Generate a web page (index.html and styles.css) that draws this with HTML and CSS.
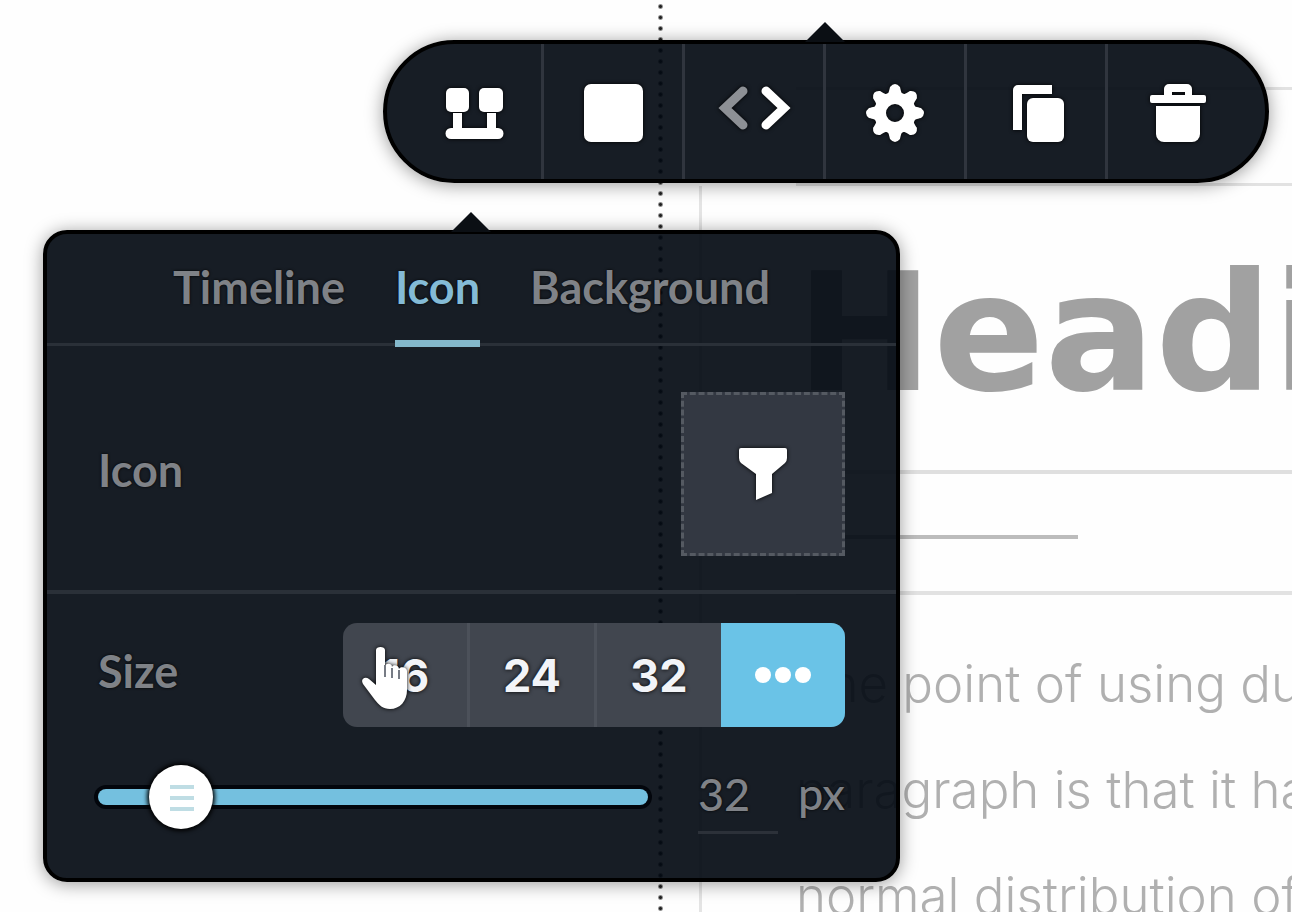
FILE: index.html
```html
<!DOCTYPE html>
<html lang="en">
<head>
  <meta charset="UTF-8" />
  <meta name="viewport" content="width=device-width, initial-scale=1.0">
  <title>Timeline Editor</title>
  <link rel="stylesheet" href="styles.css">
</head>
<body>
  <main class="canvas">
    <div class="block-spacer"></div>
    <div class="block-spacer short"></div>
    <article class="block">
      <h1>Heading</h1>
      <div class="block-divider"><hr></div>
      <p>The point of using dummy<br>paragraph is that it has<br>normal distribution of</p>
    </article>
    <div class="guide"></div>
  </main>

  <div class="toolbar" role="toolbar" aria-label="Element tools">
    <button type="button" aria-label="Timeline">
      <svg width="60" height="60" viewBox="0 0 60 60">
        <rect x="2" y="5" width="23" height="24" rx="5"/>
        <rect x="35" y="5" width="24" height="24" rx="5"/>
        <path d="M9 30h9v15h25V30h9v15h2a5 5 0 0 1 0 11H7a5 5 0 0 1 0-11h2z"/>
      </svg>
    </button>
    <button type="button" aria-label="Background">
      <svg width="60" height="60" viewBox="0 0 60 60"><rect x="1" y="1" width="59" height="58" rx="7"/></svg>
    </button>
    <button type="button" aria-label="Code">
      <svg width="76" height="60" viewBox="0 0 76 60">
        <path class="line dim" d="M27 8 9 25l18 17"/>
        <path class="line" d="m50 8 18 17-18 17"/>
      </svg>
    </button>
    <button type="button" aria-label="Settings">
      <svg width="60" height="60" viewBox="0 0 60 60">
        <g transform="translate(30 30)">
          <circle r="15" class="ring"/>
          <path id="tooth" d="M-10-17C-6-19-6-22-5-26q5-6 10 0C6-22 6-19 10-17z"/>
          <use href="#tooth" transform="rotate(45)"/>
          <use href="#tooth" transform="rotate(90)"/>
          <use href="#tooth" transform="rotate(135)"/>
          <use href="#tooth" transform="rotate(180)"/>
          <use href="#tooth" transform="rotate(225)"/>
          <use href="#tooth" transform="rotate(270)"/>
          <use href="#tooth" transform="rotate(315)"/>
        </g>
      </svg>
    </button>
    <button type="button" aria-label="Duplicate">
      <svg width="60" height="60" viewBox="0 0 60 60">
        <path d="M12 2h34v9H16v36H7V7a5 5 0 0 1 5-5z"/>
        <rect x="21" y="15" width="37" height="44" rx="6"/>
      </svg>
    </button>
    <button type="button" aria-label="Delete">
      <svg width="60" height="60" viewBox="0 0 60 60">
        <path fill-rule="evenodd" d="M21 1h18a5 5 0 0 1 5 5v6h12a2 2 0 0 1 2 2v4a2 2 0 0 1-2 2H4a2 2 0 0 1-2-2v-4a2 2 0 0 1 2-2h12V6a5 5 0 0 1 5-5zm3 8v3h13V9z"/>
        <path d="M8 23h44v28a8 8 0 0 1-8 8H16a8 8 0 0 1-8-8z"/>
      </svg>
    </button>
  </div>

  <section class="panel">
    <nav class="tabs">
      <a href="#timeline">Timeline</a>
      <a href="#icon" class="active">Icon</a>
      <a href="#background">Background</a>
    </nav>
    <div class="row icon-row">
      <label class="label" for="iconPicker">Icon</label>
      <button type="button" class="icon-picker" id="iconPicker">
        <svg width="50" height="54" viewBox="0 0 50 54"><path d="M3 1h44q2 0 2 2v8q0 3-2 5L34 27v19l-16 7V27L3 16q-2-2-2-5V3q0-2 2-2z"/></svg>
      </button>
    </div>
    <div class="row size-row">
      <span class="label" id="sizeLabel">Size</span>
      <div class="segments" role="group" aria-labelledby="sizeLabel">
        <button type="button">16</button>
        <button type="button">24</button>
        <button type="button">32</button>
        <button type="button" class="active" aria-label="Custom size">
          <svg width="60" height="18" viewBox="0 0 60 18"><circle cx="10" cy="9" r="8"/><circle cx="30" cy="9" r="8"/><circle cx="50" cy="9" r="8"/></svg>
        </button>
      </div>
    </div>
    <div class="row slider-row">
      <input type="range" class="slider" min="0" max="304" value="32" aria-labelledby="sizeLabel">
      <input type="text" class="number" id="sizeValue" value="32">
      <label class="label unit" for="sizeValue">px</label>
    </div>
  </section>

  <!-- hand pointer over the 16 button -->
  <svg class="pointer" width="48" height="66" viewBox="0 0 48 66">
    <path d="M15 5c0-4 9-4 9 0v16c1-3 7-3 7 1 1-3 7-2 7 2 1-3 8-2 8 2v19c0 11-7 19-17 19-7 0-11-4-15-9L2 39c-3-5 2-8 6-5l7 6z"/>
    <path class="fingers" d="M24 20v12M31 23v10M38 25v9"/>
  </svg>
</body>
</html>
```
FILE: styles.css
```css
* {
  box-sizing: border-box;
}
body {
  margin: 0;
  height: 100vh;
  overflow: hidden;
  background: #fefefe;
  font-family: 'Lato', sans-serif;
}
button {
  padding: 0;
  border: none;
  background: none;
  cursor: pointer;
}
svg {
  display: block;
  fill: #fff;
}

/* page being edited */
.canvas {
  position: relative;
  height: 100vh;
  overflow: hidden;
}
.guide {
  position: absolute;
  top: 0;
  bottom: 0;
  left: 658px;
  width: 5px;
  background: radial-gradient(circle, #222 1px, transparent 3px) 0 1px / 5px 11px;
}
.block-spacer {
  height: 90px;
  margin-left: 796px;
  border-bottom: 3px solid #e2e2e2;
}
.block-spacer.short {
  height: 96px;
}
.block {
  margin-left: 699px;
  padding-left: 94px;
  border-left: 3px solid #e4e4e4;
  white-space: nowrap;
  font-family: 'Inter', sans-serif;
}
h1 {
  margin: 0;
  height: 288px;
  border-bottom: 4px solid #dfdfdf;
  font-family: 'DejaVu Sans', sans-serif;
  font-size: 164px;
  font-weight: 700;
  line-height: 296px;
  color: #a1a1a1;
}
.block-divider {
  height: 121px;
  padding-top: 61px;
  border-bottom: 4px solid #e2e2e2;
}
hr {
  width: 282px;
  height: 4px;
  margin: 0;
  border: none;
  background: #bcbcbc;
}
p {
  margin: 36px 0 0;
  font-size: 51px;
  font-weight: 300;
  line-height: 106px;
  color: #b0b0b0;
}

/* floating dark surfaces */
.toolbar,
.panel {
  position: absolute;
  border: 4px solid #000;
  background: rgba(3, 10, 18, 0.92);
  box-shadow: 0 2px 18px rgba(0, 0, 0, 0.4);
}
.toolbar::before,
.panel::before {
  content: "";
  position: absolute;
  width: 40px;
  height: 20px;
  background: #0b0f14;
  clip-path: polygon(50% 0, 100% 100%, 0 100%);
}
.toolbar {
  top: 40px;
  left: 383px;
  display: flex;
  height: 143px;
  border-radius: 72px;
}
.toolbar::before {
  top: -22px;
  left: 418px;
}
.toolbar button {
  display: flex;
  align-items: center;
  justify-content: center;
  width: 141px;
  padding-top: 2px;
  border-right: 3px solid #30353e;
}
.toolbar button:first-child {
  width: 157px;
  padding-left: 20px;
}
.toolbar button:last-child {
  width: 157px;
  padding-right: 17px;
  border-right: none;
}
.toolbar svg,
.icon-picker svg {
  filter: drop-shadow(0 0 2px #000);
}
.line {
  fill: none;
  stroke: #fff;
  stroke-width: 9;
  stroke-linecap: round;
}
.line.dim {
  stroke: #8d9095;
}
.ring {
  fill: none;
  stroke: #fff;
  stroke-width: 12;
}

.panel {
  top: 230px;
  left: 43px;
  width: 857px;
  height: 652px;
  border-radius: 24px;
  font-size: 45px;
  font-weight: 700;
  color: #7f8287;
  text-shadow: 0 0 3px #000;
}
.panel::before {
  top: -22px;
  left: 404px;
}
.tabs {
  display: flex;
  justify-content: center;
  gap: 50px;
  height: 112px;
  border-bottom: 3px solid #2a3038;
}
.tabs a {
  height: 113px;
  line-height: 106px;
  color: inherit;
  text-decoration: none;
}
.tabs .active {
  border-bottom: 7px solid #84b8cb;
  color: #84bbd6;
}
.row {
  display: flex;
  align-items: center;
  justify-content: space-between;
  padding: 0 51px;
}
.icon-row {
  height: 248px;
  padding-top: 12px;
  border-bottom: 4px solid #2a3038;
}
.icon-picker {
  display: grid;
  place-items: center;
  width: 164px;
  height: 164px;
  border: 3px dashed #555a62;
  background: #333842;
}
.size-row {
  height: 162px;
}
.label {
  padding-bottom: 8px;
}
.unit {
  font-weight: 500;
}
.segments {
  display: flex;
  width: 502px;
  height: 104px;
  overflow: hidden;
  border-radius: 14px;
  background: #41464f;
}
.segments button {
  display: grid;
  flex: 1;
  place-items: center;
  border-right: 3px solid #4c515a;
  font-family: 'Inter', sans-serif;
  font-size: 45px;
  font-weight: 700;
  color: #f2f4f8;
  text-shadow: 0 0 4px #000;
}
.segments button:nth-child(3),
.segments button:last-child {
  border-right: none;
}
.segments .active {
  background: #6ac3e7;
}
.slider-row {
  height: 82px;
}
.slider {
  appearance: none;
  width: 550px;
  height: 64px;
  margin: 0;
  background: none;
}
.slider::-webkit-slider-runnable-track {
  height: 16px;
  border-radius: 8px;
  background: #74c0df;
  box-shadow: 0 0 0 4px #03060c;
}
.slider::-webkit-slider-thumb {
  appearance: none;
  width: 64px;
  height: 64px;
  margin-top: -24px;
  border-radius: 50%;
  background:
    linear-gradient(#bfdde4, #bfdde4) 21px 20px / 24px 4px no-repeat,
    linear-gradient(#bfdde4, #bfdde4) 21px 31px / 24px 4px no-repeat,
    linear-gradient(#bfdde4, #bfdde4) 21px 42px / 24px 4px no-repeat,
    #fff;
  box-shadow: 0 0 4px 2px #000;
}
.number {
  width: 80px;
  height: 74px;
  margin-left: 30px;
  padding: 0 0 4px;
  border: none;
  border-bottom: 3px solid #2c3139;
  background: none;
  font: inherit;
  font-weight: 500;
  color: inherit;
  text-shadow: inherit;
}

.pointer {
  position: absolute;
  top: 645px;
  left: 361px;
  filter: drop-shadow(0 0 2px #000);
}
.fingers {
  fill: none;
  stroke: #777c85;
  stroke-width: 2;
}
```
